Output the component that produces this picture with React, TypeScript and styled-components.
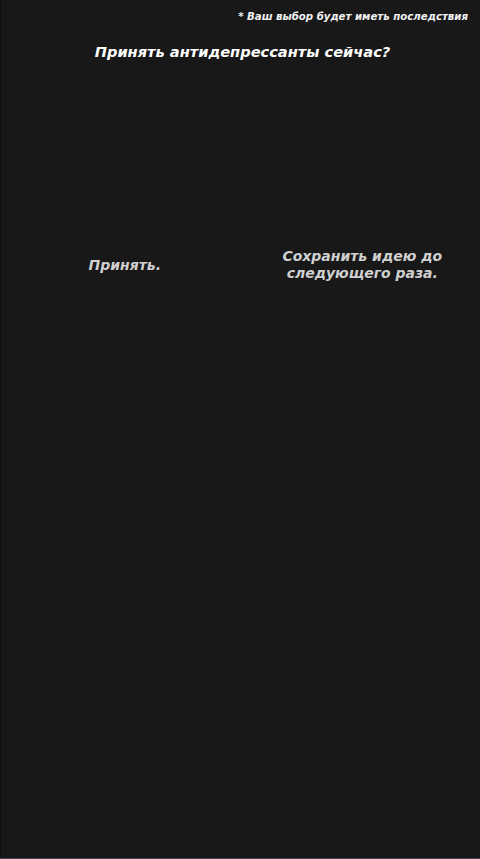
import React from "react";
import styled, { createGlobalStyle } from "styled-components";

const Global = createGlobalStyle`
  html, body { margin: 0; padding: 0; background: #181818; }
  #root { min-height: 100vh; }
`;

const Screen = styled.div`
  position: relative;
  box-sizing: border-box;
  width: 480px;
  height: 859px;
  background: #181818;
  border-left: 1px solid #0f0f0f;
  border-bottom: 1px solid #0c0c10;
  box-shadow: inset 0 -1px 0 #141414;
  font-family: "DejaVu Sans", "Liberation Sans", sans-serif;
  font-weight: bold;
  font-style: italic;
  display: flex;
  flex-direction: column;
  &::after {
    content: "";
    position: absolute;
    left: -1px;
    right: 0;
    bottom: -1px;
    height: 1px;
    background: #4a4560;
  }
`;

const Note = styled.div`
  align-self: flex-end;
  margin: 10px 12px 0 0;
  font-size: 10.2px;
  color: #f2f2f2;
  line-height: 13px;
`;

const Question = styled.h1`
  margin: 19px 0 0;
  text-align: center;
  font-size: 14.6px;
  line-height: 20px;
  color: #ffffff;
  font-weight: bold;
  padding-left: 4px;
`;

const Choices = styled.div`
  display: grid;
  grid-template-columns: 1fr 1fr;
  align-items: center;
  margin-top: 186px;
`;

const Choice = styled.button<{ $shift?: number }>`
  background: none;
  border: none;
  padding: 0;
  font: inherit;
  font-size: 14px;
  line-height: 17px;
  color: #d0d0d0;
  text-align: center;
  cursor: pointer;
  margin-left: ${(p) => p.$shift ?? 0}px;
`;

export default function App() {
  return (
    <>
      <Global />
      <Screen>
        <Note>* Ваш выбор будет иметь последствия</Note>
        <Question>Принять антидепрессанты сейчас?</Question>
        <Choices>
          <Choice $shift={8}>Принять.</Choice>
          <Choice $shift={4}>
            Сохранить идею до
            <br />
            следующего раза.
          </Choice>
        </Choices>
      </Screen>
    </>
  );
}
